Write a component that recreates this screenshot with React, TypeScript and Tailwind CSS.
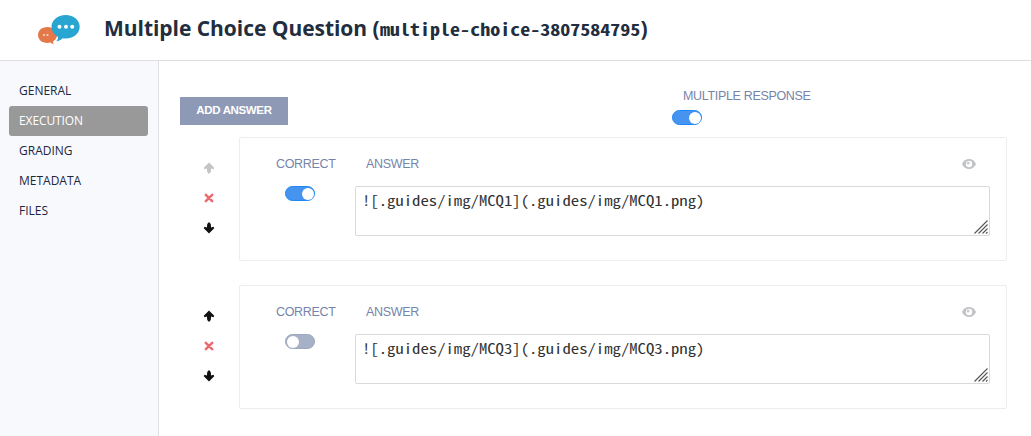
import { useState } from 'react';

const NAV = ['GENERAL', 'EXECUTION', 'GRADING', 'METADATA', 'FILES'];

const MONO = "font-['Noto_Sans_Mono_CJK_SC','Liberation_Mono',monospace]";

function Logo() {
  return (
    <svg width="44" height="34" viewBox="0 0 44 34" className="mt-[5px] shrink-0">
      <path
        d="M10.500 12C4.800 12 1 15.600 1 20s3.800 8 9.500 8c1 0 2-.1 2.900-.4.900.9 2 1.500 3.500 1.700-.7-.9-1-1.800-1-2.800C18.500 25 20 22.700 20 20c0-4.400-3.800-8-9.500-8z"
        fill="#e57848"
      />
      <path
        d="M28.700 0C20.500 0 14.500 5.200 14.500 11.800c0 4.300 2.500 8 6.600 10.100-.1 1.700-.8 3.200-1.900 4.400 2.700-.3 4.900-1.400 6.400-3.100 1 .2 2 .3 3.100.3 8.200 0 14-5.200 14-11.700S36.900 0 28.700 0z"
        fill="#29a5d1"
      />
      <g fill="#fff">
        <circle cx="22.500" cy="11.700" r="2" />
        <circle cx="29" cy="11.700" r="2" />
        <circle cx="35.200" cy="11.700" r="2" />
      </g>
      <g fill="#fbd9c8">
        <circle cx="7" cy="20" r="1.100" />
        <circle cx="10.500" cy="20" r="1.100" />
      </g>
    </svg>
  );
}

function Toggle({ initial }: { initial: boolean }) {
  const [on, setOn] = useState(initial);
  return (
    <button
      type="button"
      role="switch"
      aria-checked={on}
      onClick={() => setOn(!on)}
      className={`flex h-[15px] w-[30px] items-center rounded-full border ${
        on ? 'justify-end border-[#1a88f5] bg-[#4794f0]' : 'justify-start border-[#9ca8c0] bg-[#a6b0c6]'
      }`}
    >
      <span className="mx-[0.5px] size-3 rounded-full bg-white" />
    </button>
  );
}

function Arrow({ down = false, muted = false }: { down?: boolean; muted?: boolean }) {
  return (
    <svg
      width="12"
      height="12"
      viewBox="0 0 12 12"
      className={`${down ? 'rotate-180' : ''} ${muted ? 'text-[#c4c4c4]' : 'text-[#111]'}`}
    >
      <path
        d="M6 .4 11.200 5.700 10.600 7.200 8.100 6.600 7.800 9.800 6.700 11.500H5.300L4.200 9.800 3.900 6.600 1.400 7.200.8 5.700Z"
        fill="currentColor"
      />
    </svg>
  );
}

function Cross() {
  return (
    <svg width="10" height="10" viewBox="0 0 10 10">
      <path d="M1.800 1.800 8.200 8.200M8.200 1.800 1.800 8.200" stroke="#ec6a6e" strokeWidth="2.500" strokeLinecap="round" />
    </svg>
  );
}

function Eye() {
  return (
    <svg width="14" height="10" viewBox="0 0 14 10">
      <path d="M0 5C1.500 1.800 4 0 7 0s5.500 1.800 7 5c-1.500 3.200-4 5-7 5S1.500 8.200 0 5z" fill="#c0c2c5" />
      <circle cx="7" cy="5" r="3.200" fill="#fff" />
      <circle cx="6.200" cy="4" r="1.500" fill="#c9cbce" />
    </svg>
  );
}

function Grip() {
  return (
    <svg width="14" height="14" viewBox="0 0 14 14" className="absolute right-px bottom-px">
      <path d="M.5 13.500 13.500.5M4.500 13.500l9-9M8.500 13.500l5-5M12 13.500l1.500-1.500" stroke="#555" strokeWidth="1.100" />
    </svg>
  );
}

function AnswerRow({ text, correct, first = false }: { text: string; correct: boolean; first?: boolean }) {
  return (
    <div className="flex">
      <div className="mr-px flex w-[58px] flex-col pt-4">
        <button type="button" className="flex h-[30px] items-center justify-center">
          <Arrow muted={first} />
        </button>
        <button type="button" className="flex h-[30px] items-center justify-center">
          <Cross />
        </button>
        <button type="button" className="flex h-[30px] items-center justify-center">
          <Arrow down />
        </button>
      </div>
      <div className="flex h-[124px] w-[768px] rounded-[2px] border border-[#ededed] pt-[18px] pr-4 text-[12.5px] leading-4 tracking-[-0.33px] text-[#7684aa]">
        <div className="flex w-[115px] flex-col pl-9">
          <span>CORRECT</span>
          <div className="mt-[14px] ml-[9px]">
            <Toggle initial={correct} />
          </div>
        </div>
        <div className="flex flex-1 flex-col">
          <div className="flex h-4 items-center justify-between pr-[14px] pl-[11px]">
            <span>ANSWER</span>
            <Eye />
          </div>
          <div
            className={`relative mt-[14px] h-[50px] rounded-[2px] border border-[#d9d9d9] px-[6px] pt-[3px] leading-5 tracking-normal whitespace-pre text-[#333] ${MONO}`}
          >
            <span className="inline-block origin-left scale-x-[1.193] text-[14px]">{text}</span>
            <Grip />
          </div>
        </div>
      </div>
    </div>
  );
}

export default function App() {
  const [active, setActive] = useState('EXECUTION');
  return (
    <div className="flex h-[436px] w-[1031px] flex-col overflow-hidden bg-white font-['Liberation_Sans',sans-serif]">
      <header className="flex h-[61px] shrink-0 items-center border-b border-[#dedede] pb-px pl-[37px]">
        <Logo />
        <h1 className="-mt-[3px] ml-[23px] flex items-baseline font-['Open_Sans',sans-serif] text-[21px] leading-7 font-bold whitespace-pre text-[#222d3d]">
          <span className="tracking-[-0.04px]">Multiple Choice Question (</span>
          <span className={`w-[261px] text-[16.6px] leading-7 ${MONO}`}>
            <span className="inline-block origin-left scale-x-[1.207]">multiple-choice-3807584795</span>
          </span>
          <span>)</span>
        </h1>
      </header>
      <div className="flex flex-1">
        <nav className="flex w-[159px] shrink-0 flex-col border-r border-[#dfe1e4] bg-[#f7f9fd] pt-[15px] pr-[10px] pl-[9px]">
          {NAV.map((item) => (
            <button
              key={item}
              type="button"
              onClick={() => setActive(item)}
              className={`h-[30px] rounded-[3px] px-[10px] text-left font-['Open_Sans',sans-serif] text-[12px] ${
                item === active ? 'bg-[#999] font-medium tracking-[-0.1px] text-white' : 'text-[#1d2740]'
              }`}
            >
              {item}
            </button>
          ))}
        </nav>
        <main className="flex flex-1 flex-col pl-[21px]">
          <div className="flex h-[76px] items-start">
            <button
              type="button"
              className="mt-9 h-7 w-[108px] bg-[#8d99b5] text-[11.5px] font-bold tracking-[-0.35px] text-white"
            >
              ADD ANSWER
            </button>
            <div className="mt-[27px] ml-[384px] flex flex-col">
              <span className="pl-[11px] text-[12.5px] leading-4 tracking-[-0.33px] text-[#7684aa]">MULTIPLE RESPONSE</span>
              <div className="mt-[6px]">
                <Toggle initial />
              </div>
            </div>
          </div>
          <div className="flex flex-col gap-6">
            <AnswerRow text="![.guides/img/MCQ1](.guides/img/MCQ1.png)" correct first />
            <AnswerRow text="![.guides/img/MCQ3](.guides/img/MCQ3.png)" correct={false} />
          </div>
        </main>
      </div>
    </div>
  );
}
